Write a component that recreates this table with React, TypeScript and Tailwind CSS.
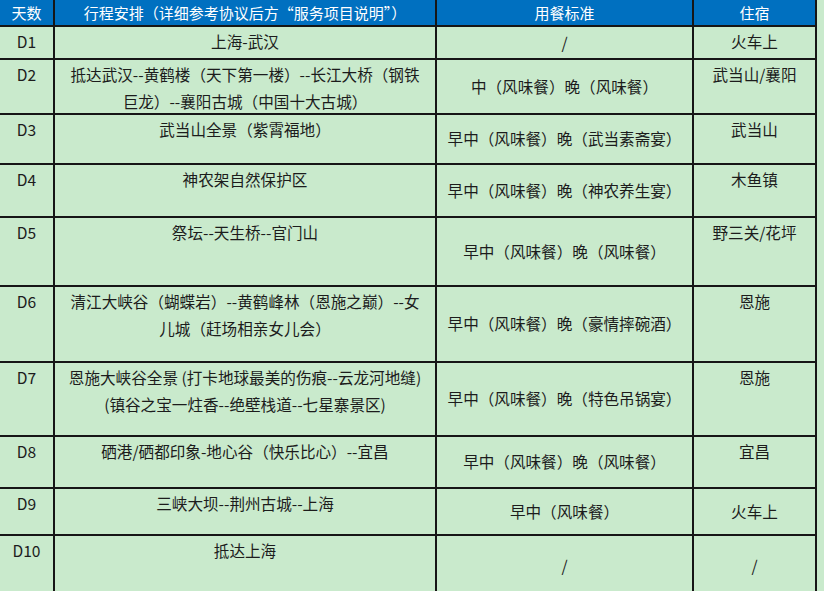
import React from 'react';

type Row = {
    day: string;
    route: React.ReactNode;
    meal: string;
    stay: string;
    stayMiddle?: boolean;
};

const ROWS: Row[] = [
    { day: 'D1', route: '上海-武汉', meal: '/', stay: '火车上' },
    { day: 'D2', route: <>抵达武汉--黄鹤楼（天下第一楼）--长江大桥（钢铁<br />巨龙）--襄阳古城（中国十大古城）</>, meal: '中（风味餐）晚（风味餐）', stay: '武当山/襄阳' },
    { day: 'D3', route: '武当山全景（紫霄福地）', meal: '早中（风味餐）晚（武当素斋宴）', stay: '武当山' },
    { day: 'D4', route: '神农架自然保护区', meal: '早中（风味餐）晚（神农养生宴）', stay: '木鱼镇' },
    { day: 'D5', route: '祭坛--天生桥--官门山', meal: '早中（风味餐）晚（风味餐）', stay: '野三关/花坪' },
    { day: 'D6', route: <>清江大峡谷（蝴蝶岩）--黄鹤峰林（恩施之巅）--女<br />儿城（赶场相亲女儿会）</>, meal: '早中（风味餐）晚（豪情摔碗酒）', stay: '恩施' },
    { day: 'D7', route: <>恩施大峡谷全景 (打卡地球最美的伤痕--云龙河地缝)<br />(镇谷之宝一炷香--绝壁栈道--七星寨景区)</>, meal: '早中（风味餐）晚（特色吊锅宴）', stay: '恩施' },
    { day: 'D8', route: '硒港/硒都印象-地心谷（快乐比心）--宜昌', meal: '早中（风味餐）晚（风味餐）', stay: '宜昌' },
    { day: 'D9', route: '三峡大坝--荆州古城--上海', meal: '早中（风味餐）', stay: '火车上', stayMiddle: true },
    { day: 'D10', route: '抵达上海', meal: '/', stay: '/', stayMiddle: true },
];

const cell = 'border-r-2 border-b-2 border-[#161616] text-center';
const head = `${cell} bg-[#0070c0] text-white text-[15px] leading-[25px]`;

export default function App() {
    return (
        <div
            className="w-[824px] h-[591px] overflow-hidden bg-[#c9eacc] text-[15.6px] text-[#1c1c1c]"
            style={{ fontFamily: '"Noto Sans CJK SC", "Noto Sans", sans-serif' }}
        >
            <div className="grid grid-cols-[55px_382px_257px_123px] grid-rows-[27px_33px_55px_50px_53px_69px_76px_74px_52px_47px_62px] w-[817px]">
                <div className={head}>天数</div>
                <div className={head}>行程安排（详细参考协议后方“服务项目说明”）</div>
                <div className={head}>用餐标准</div>
                <div className={head}>住宿</div>
                {ROWS.map(r => (
                    <React.Fragment key={r.day}>
                        <div className={`${cell} leading-[27px] pt-[1px]`}>{r.day}</div>
                        <div className={`${cell} leading-[27px] pt-[1px] whitespace-nowrap`}>{r.route}</div>
                        <div className={`${cell} flex items-center justify-center`}>{r.meal}</div>
                        {r.stayMiddle ? (
                            <div className={`${cell} flex items-center justify-center`}>{r.stay}</div>
                        ) : (
                            <div className={`${cell} leading-[27px] pt-[1px]`}>{r.stay}</div>
                        )}
                    </React.Fragment>
                ))}
            </div>
        </div>
    );
}
